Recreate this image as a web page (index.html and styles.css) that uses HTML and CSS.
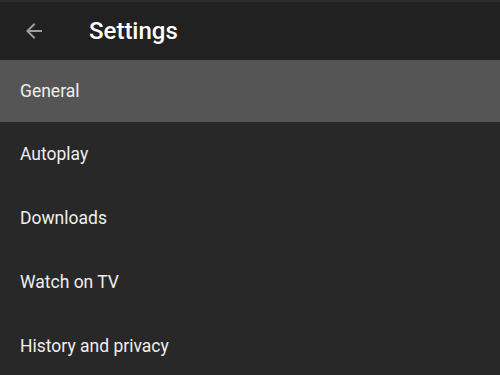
FILE: index.html
```html
<!DOCTYPE html>
<html lang="en">
<head>
    <meta charset="UTF-8">
    <title>Settings</title>
    <link rel="stylesheet" href="styles.css">
</head>
<body>
    <div class="app">
        <!-- Шапка -->
        <header class="top-bar">
            <button class="back-btn" aria-label="Back">
                <svg width="24" height="24" viewBox="0 0 24 24">
                    <path d="M20 11H7.83l5.59-5.59L12 4l-8 8 8 8 1.41-1.41L7.83 13H20v-2z" fill="#9e9e9e"/>
                </svg>
            </button>
            <h1 class="title">Settings</h1>
        </header>

        <!-- Список настроек -->
        <ul class="settings-list">
            <li class="settings-item active">General</li>
            <li class="settings-item">Autoplay</li>
            <li class="settings-item">Downloads</li>
            <li class="settings-item">Watch on TV</li>
            <li class="settings-item">History and privacy</li>
        </ul>
    </div>
</body>
</html>
```

FILE: styles.css
```css
/* Основные стили */
body {
    margin: 0;
    padding: 0;
    overflow: hidden;
    background-color: #282828;
    font-family: Roboto, 'Noto Sans', Arial, sans-serif;
}

.app {
    width: 500px;
    height: 375px;
    overflow: hidden;
}

/* Шапка */
.top-bar {
    height: 60px;
    display: flex;
    align-items: center;
    background-color: #212121;
    border-top: 2px solid #2c2c2c;
    box-sizing: border-box;
}

.back-btn {
    width: 24px;
    height: 24px;
    margin-left: 22px;
    padding: 0;
    border: none;
    background: none;
    display: flex;
}

.title {
    margin: 0 0 0 43px;
    font-size: 24px;
    font-weight: 500;
    color: #ffffff;
}

/* Список */
.settings-list {
    list-style: none;
    margin: 0;
    padding: 0;
}

.settings-item {
    height: 64px;
    display: flex;
    align-items: center;
    padding-left: 20px;
    font-size: 17.5px;
    color: #eeeeee;
}

.settings-item.active {
    height: 62px;
    background-color: #555555;
}
```
